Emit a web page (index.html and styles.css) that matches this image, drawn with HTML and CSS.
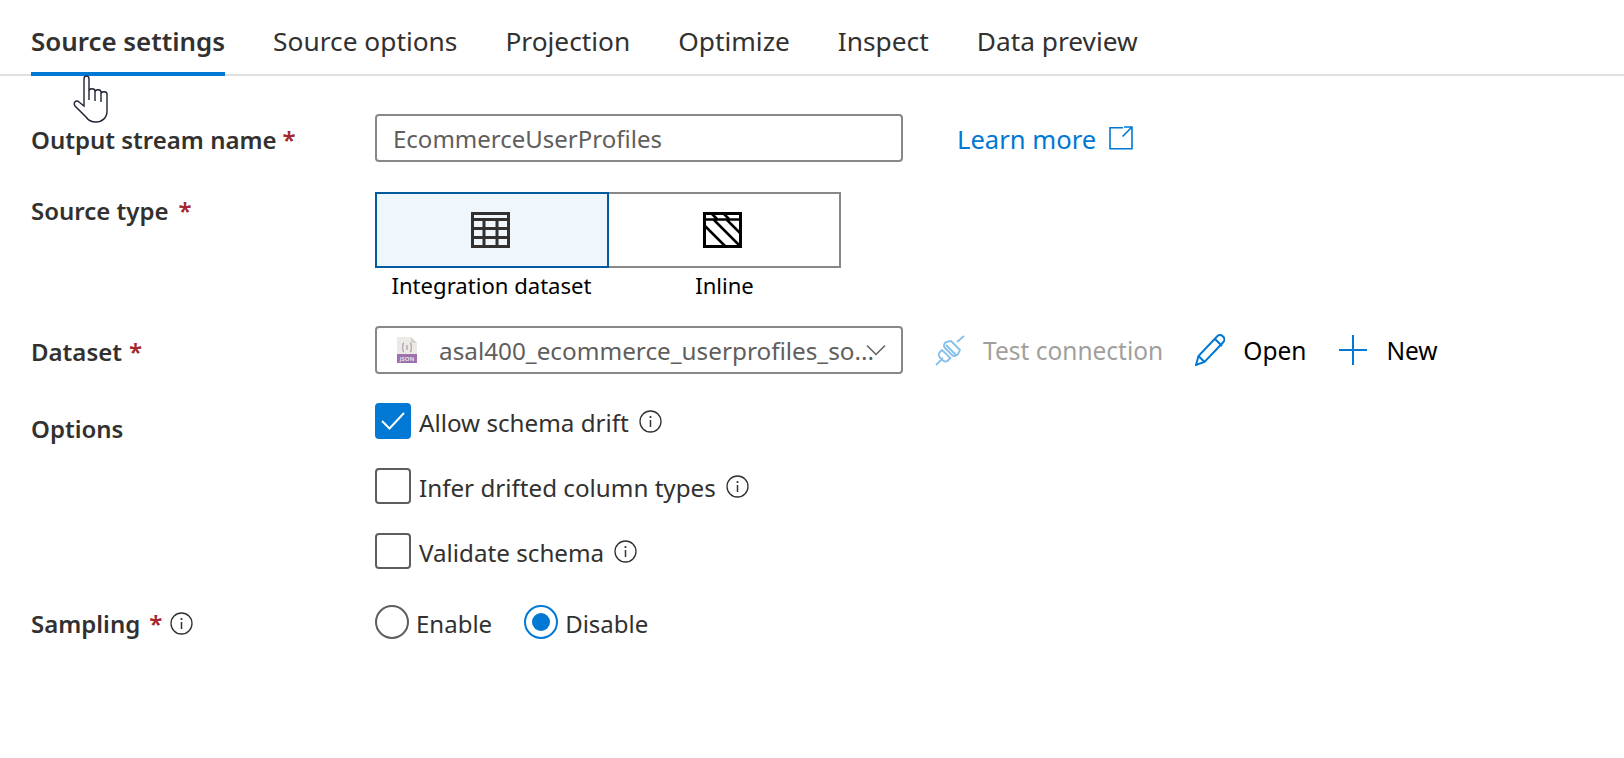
FILE: index.html
```html
<!DOCTYPE html>
<html lang="en">
<head>
<meta charset="utf-8">
<title>Source settings</title>
<link rel="stylesheet" href="styles.css">
</head>
<body>
<nav class="tabs">
  <a class="tab active">Source settings</a>
  <a class="tab">Source options</a>
  <a class="tab">Projection</a>
  <a class="tab">Optimize</a>
  <a class="tab">Inspect</a>
  <a class="tab">Data preview</a>
</nav>
<svg class="cursor" width="36" height="50" viewBox="0 0 36 50"><path d="M11 4c0-4 5-4 5 0V16c0-3 6-3 6 0v1c0-3 6-3 6 0v2c0-3 6-3 6 0V36c0 7-5 11-11 11-5 0-8-2-10-5L2 31c-2-3 1-7 4-4l5 4z" fill="#fff" stroke="#1f2433" stroke-width="1.400"/><path d="M16 16v9M22 17v9M28 19v8" stroke="#1f2433" stroke-width="1.400" fill="none"/></svg>
<main class="form">
  <div class="row row-name">
    <label class="label">Output stream name <span class="req">*</span></label>
    <div class="control">
      <div class="input">EcommerceUserProfiles</div>
      <a class="learn">Learn more
        <svg class="ext" width="24" height="24" viewBox="0 0 24 24" fill="none" stroke="#0078d4" stroke-width="1.600"><path d="M14 1.800H1v21h22V9M15 1h8v8M23 1 13.500 10.500" /></svg>
      </a>
    </div>
  </div>

  <div class="row row-type">
    <label class="label">Source type <span class="req">*</span></label>
    <div class="types">
      <div class="type-boxes">
        <div class="type-box selected">
          <svg width="39" height="36" viewBox="0 0 39 36"><path fill="#323130" fill-rule="evenodd" d="M0 0h39v36H0zM3 3v3h33V3zM3 9v6h8.500V9zM14.500 9v6h10V9zM27.500 9v6H36V9zM3 18v6h8.500v-6zM14.500 18v6h10v-6zM27.500 18v6H36v-6zM3 27v6h8.500v-6zM14.500 27v6h10v-6zM27.500 27v6H36v-6z"/></svg>
        </div>
        <div class="type-box">
          <svg width="39" height="36" viewBox="0 0 39 36"><rect x="1.500" y="1.500" width="36" height="33" fill="#fff" stroke="#000" stroke-width="3"/><path d="M2 7.500h35M9 2l5 5M21 2l5 5M2 14l20 20M11 8l26 26M24 8l14 14" stroke="#000" stroke-width="2.500" fill="none"/></svg>
        </div>
      </div>
      <div class="type-labels"><span>Integration dataset</span><span>Inline</span></div>
    </div>
  </div>

  <div class="row row-dataset">
    <label class="label">Dataset <span class="req">*</span></label>
    <div class="control">
      <div class="input select">
        <svg class="json" width="20" height="26" viewBox="0 0 20 26"><path d="M0 0h14l6 6v20H0z" fill="#eceae4"/><path d="M14 0l6 6h-6z" fill="#d5d3cc"/><rect y="17" width="20" height="9" fill="#9b72ad"/><path d="M7 6C5.500 6 6 8 6 9s-1 1.500-1 1.500S6 11 6 12s-.5 3 1 3M13 6c1.500 0 1 2 1 3s1 1.500 1 1.500S14 11 14 12s.5 3-1 3M10 8v5" stroke="#9a86a6" fill="none"/><text class="json-text" x="10" y="24" text-anchor="middle">JSON</text></svg>
        <span class="select-text">asal400_ecommerce_userprofiles_so...</span>
        <svg class="chev" width="20" height="12" viewBox="0 0 20 12" fill="none" stroke="#605e5c" stroke-width="1.500"><path d="M1 1.500l9 9 9-9"/></svg>
      </div>
      <div class="actions">
        <a class="action disabled">
          <svg width="30" height="31" viewBox="0 0 30 31" fill="none" stroke="#85bfea" stroke-width="1.800"><path d="M1 30l7-7M29 1l-7 6M11 10l10 10M16 6l9 9-2 4c-2 2-4 3-6 1l-7-7c-2-2-1-4 1-6z M7 15l-2 2c-2 2-1.500 4 0 5.500l3 3c1.500 1.500 3.500 1.500 5.500-.5l2-2z"/></svg>
          Test connection
        </a>
        <a class="action">
          <svg width="30" height="32" viewBox="0 0 30 32" fill="none" stroke="#0078d4" stroke-width="2"><path d="M1 31l2.500-9L22 2.500c2-2 4-2 6 0s2 4 0 6L9.500 28zM3.500 22l6 6M20 5l7 7"/></svg>
          Open
        </a>
        <a class="action">
          <svg class="plus" width="30" height="30" viewBox="0 0 30 30" stroke="#0078d4" stroke-width="2"><path d="M1 15h28M15 0v30"/></svg>
          New
        </a>
      </div>
    </div>
  </div>

  <div class="row row-options">
    <label class="label">Options</label>
    <div class="checks">
      <div class="check">
        <span class="box on"><svg width="26" height="20" viewBox="0 0 26 20" fill="none" stroke="#fff" stroke-width="2"><path d="M2 10l7.500 7.500L24 2"/></svg></span>
        <span class="check-text">Allow schema drift</span>
        <svg class="info" width="23" height="23" viewBox="0 0 23 23"><circle cx="11.500" cy="11.500" r="10.500" fill="none" stroke="#323130" stroke-width="1.300"/><path d="M11.500 10v7" stroke="#323130" stroke-width="1.500"/><circle cx="11.500" cy="7" r="1.100" fill="#323130"/></svg>
      </div>
      <div class="check">
        <span class="box"></span>
        <span class="check-text">Infer drifted column types</span>
        <svg class="info" width="23" height="23" viewBox="0 0 23 23"><circle cx="11.500" cy="11.500" r="10.500" fill="none" stroke="#323130" stroke-width="1.300"/><path d="M11.500 10v7" stroke="#323130" stroke-width="1.500"/><circle cx="11.500" cy="7" r="1.100" fill="#323130"/></svg>
      </div>
      <div class="check">
        <span class="box"></span>
        <span class="check-text">Validate schema</span>
        <svg class="info" width="23" height="23" viewBox="0 0 23 23"><circle cx="11.500" cy="11.500" r="10.500" fill="none" stroke="#323130" stroke-width="1.300"/><path d="M11.500 10v7" stroke="#323130" stroke-width="1.500"/><circle cx="11.500" cy="7" r="1.100" fill="#323130"/></svg>
      </div>
    </div>
  </div>

  <div class="row row-sampling">
    <label class="label">Sampling <span class="req">*</span>
      <svg class="info label-info" width="23" height="23" viewBox="0 0 23 23"><circle cx="11.500" cy="11.500" r="10.500" fill="none" stroke="#323130" stroke-width="1.300"/><path d="M11.500 10v7" stroke="#323130" stroke-width="1.500"/><circle cx="11.500" cy="7" r="1.100" fill="#323130"/></svg>
    </label>
    <div class="radios">
      <div class="radio-item"><span class="radio"></span><span class="radio-text">Enable</span></div>
      <div class="radio-item"><span class="radio on"></span><span class="radio-text">Disable</span></div>
    </div>
  </div>
</main>
</body>
</html>
```

FILE: styles.css
```css
* { box-sizing: border-box; }
html, body { margin: 0; padding: 0; background: #fff; }
body {
  width: 1624px;
  height: 758px;
  overflow: hidden;
  position: relative;
  font-family: "Noto Sans", "Open Sans", "Liberation Sans", sans-serif;
  font-size: 24px;
  color: #323130;
}
.tabs {
  display: flex;
  gap: 48px;
  height: 76px;
  padding-left: 31px;
  border-bottom: 2px solid #e0e0e0;
}
.tab {
  height: 76px;
  line-height: 82px;
  font-size: 26.300px;
  white-space: nowrap;
}
.tab.active {
  font-size: 25.900px;
  font-weight: 600;
  border-bottom: 4px solid #0078d4;
}
.cursor { position: absolute; left: 73px; top: 75px; }
.form { padding-left: 31px; }
.row { display: flex; }
.label {
  width: 344px;
  flex: none;
  font-weight: 600;
  display: flex;
  align-items: center;
  gap: 8px;
  height: 48px;
  white-space: nowrap;
}
.req { color: #a4262c; }
.control { display: flex; align-items: center; }
.row-name { margin-top: 38px; }
.row-name .label { gap: 6px; padding-top: 2px; }
.row-type { margin-top: 30px; }
.row-type .label { gap: 10px; height: 36px; }
.row-dataset { margin-top: 24px; }
.row-dataset .label { gap: 7px; padding-top: 2px; }
.row-options { margin-top: 29px; }
.row-options .label { height: 50px; }
.row-sampling { margin-top: 36px; }
.row-sampling .label { gap: 9px; height: 34px; padding-top: 2px; }
.input {
  width: 528px;
  height: 48px;
  border: 2px solid #8a8886;
  border-radius: 4px;
  color: #605e5c;
  padding: 0 16px;
  display: flex;
  align-items: center;
  font-size: 24px;
  white-space: nowrap;
}
.learn {
  margin-left: 54px;
  padding-top: 2px;
  color: #0078d4;
  display: flex;
  align-items: center;
  gap: 13px;
  font-size: 25.600px;
}
.ext { margin-top: -2px; }
.types { width: 466px; }
.type-boxes { display: flex; height: 76px; }
.type-box {
  flex: 1;
  border: 2px solid #8a8886;
  display: flex;
  align-items: center;
  justify-content: center;
}
.type-box svg { margin-right: 4px; }
.type-box + .type-box { border-left: 0; }
.type-box.selected { background: #eff6fc; border-color: #005a9e; }
.type-labels { display: flex; }
.type-labels span {
  flex: 1;
  text-align: center;
  color: #000;
  font-size: 22.100px;
  line-height: 34px;
  white-space: nowrap;
}
.select { padding-left: 20px; }
.json { flex: none; }
.json-text { font-size: 6px; font-weight: 600; fill: #f1ecf4; }
.select-text { margin-left: 22px; flex: none; width: 427px; font-size: 24.300px; }
.chev { flex: none; }
.actions { display: flex; align-items: center; margin-left: 32px; gap: 32px; }
.action { display: flex; align-items: center; gap: 18px; color: #000; white-space: nowrap; font-size: 24.500px; }
.action.disabled { color: #a19f9d; }
.checks { display: flex; flex-direction: column; gap: 29px; }
.check { display: flex; align-items: center; gap: 8px; height: 36px; font-size: 24.200px; }
.check-text { padding-top: 2px; }
.check .info { margin-left: 2px; }
.box {
  width: 36px;
  height: 36px;
  border: 2px solid #605e5c;
  border-radius: 4px;
  display: flex;
  align-items: center;
  justify-content: center;
  flex: none;
}
.box.on { background: #0078d4; border-color: #0078d4; }
.info { flex: none; }
.label-info { margin-left: -1px; }
.radios { display: flex; gap: 32px; }
.radio-item { display: flex; align-items: center; gap: 7px; height: 34px; }
.radio-text { padding-top: 2px; }
.radio {
  width: 34px;
  height: 34px;
  border: 2px solid #605e5c;
  border-radius: 50%;
  flex: none;
  position: relative;
}
.radio.on { border-color: #0078d4; }
.radio.on::after {
  content: "";
  position: absolute;
  left: 6px;
  top: 6px;
  width: 18px;
  height: 18px;
  border-radius: 50%;
  background: #0078d4;
}
```
